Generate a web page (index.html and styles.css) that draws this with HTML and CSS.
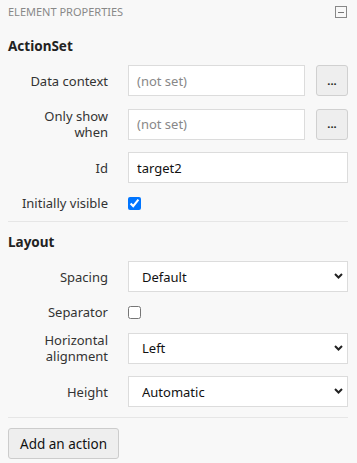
FILE: index.html
```html
<!DOCTYPE html>
<html lang="en">
<head>
    <meta charset="UTF-8">
    <meta name="viewport" content="width=device-width, initial-scale=1.0">
    <title>Element properties</title>
    <link rel="stylesheet" href="styles.css">
</head>
<body>
    <div class="panel">
        <div class="panel-header">
            <span class="panel-title">ELEMENT PROPERTIES</span>
            <span class="collapse-btn"></span>
        </div>

        <h3 class="section-title first">ActionSet</h3>
        <div class="row">
            <label class="row-label">Data context</label>
            <div class="row-control">
                <input type="text" class="text-input" placeholder="(not set)">
                <button class="dots-btn">...</button>
            </div>
        </div>
        <div class="row">
            <label class="row-label">Only show when</label>
            <div class="row-control">
                <input type="text" class="text-input" placeholder="(not set)">
                <button class="dots-btn">...</button>
            </div>
        </div>
        <div class="row">
            <label class="row-label">Id</label>
            <div class="row-control">
                <input type="text" class="text-input" value="target2">
            </div>
        </div>
        <div class="row check-row">
            <label class="row-label">Initially visible</label>
            <div class="row-control">
                <input type="checkbox" class="check" checked>
            </div>
        </div>

        <hr class="divider">

        <h3 class="section-title">Layout</h3>
        <div class="row">
            <label class="row-label">Spacing</label>
            <div class="row-control select-wrap">
                <select class="select-input">
                    <option>Default</option>
                </select>
                <svg class="chevron" width="9" height="6" viewBox="0 0 9 6"><path d="M1 1l3.5 3.5L8 1" fill="none" stroke="#222" stroke-width="2"/></svg>
            </div>
        </div>
        <div class="row check-row">
            <label class="row-label">Separator</label>
            <div class="row-control">
                <input type="checkbox" class="check">
            </div>
        </div>
        <div class="row tall-row">
            <label class="row-label">Horizontal alignment</label>
            <div class="row-control select-wrap">
                <select class="select-input">
                    <option>Left</option>
                </select>
                <svg class="chevron" width="9" height="6" viewBox="0 0 9 6"><path d="M1 1l3.5 3.5L8 1" fill="none" stroke="#222" stroke-width="2"/></svg>
            </div>
        </div>
        <div class="row">
            <label class="row-label">Height</label>
            <div class="row-control select-wrap">
                <select class="select-input">
                    <option>Automatic</option>
                </select>
                <svg class="chevron" width="9" height="6" viewBox="0 0 9 6"><path d="M1 1l3.5 3.5L8 1" fill="none" stroke="#222" stroke-width="2"/></svg>
            </div>
        </div>

        <hr class="divider">

        <button class="action-btn">Add an action</button>
    </div>
</body>
</html>
```

FILE: styles.css
```css
*{
    margin: 0;
    padding: 0;
    box-sizing: border-box;
    outline: none;
}
body {
    font-family: 'Noto Sans', 'Open Sans', sans-serif;
    font-size: 13px;
    color: #333;
    background-color: #f8f8f8;
    width: 357px;
    height: 463px;
    overflow: hidden;
}
.panel {
    padding: 4px 9px 0 8px;
}
.panel-header {
    display: flex;
    justify-content: space-between;
    align-items: center;
    height: 16px;
}
.panel-title {
    font-size: 11px;
    color: #888;
    line-height: 16px;
}
.collapse-btn {
    width: 12px;
    height: 12px;
    border: 1px solid #888;
    margin-right: 1px;
    display: flex;
    align-items: center;
    justify-content: center;
}
.collapse-btn::after {
    content: '';
    width: 6px;
    height: 1px;
    background: #777;
}
.section-title {
    font-size: 13.5px;
    font-weight: bold;
    color: #222;
    line-height: 20px;
    margin: 9px 0 9px;
}
.section-title.first {
    margin-top: 16px;
}
.row {
    display: flex;
    align-items: center;
    gap: 20px;
    margin-bottom: 12px;
}
.row-label {
    width: 100px;
    flex-shrink: 0;
    text-align: right;
    line-height: 16px;
    color: #333;
}
.tall-row {
    margin-top: 1px;
}
.row-control {
    flex: 1;
    min-width: 0;
    display: flex;
    align-items: center;
    gap: 11px;
}
.text-input {
    flex: 1;
    min-width: 0;
    width: 0;
    height: 31px;
    border: 1px solid #dcdcdc;
    background: #fff;
    padding: 0 8px;
    font-family: inherit;
    font-size: 13px;
    color: #111;
}
.text-input::placeholder {
    color: #888;
}
.dots-btn {
    width: 32px;
    height: 31px;
    flex-shrink: 0;
    border: 1px solid #d0d0d0;
    border-radius: 3px;
    background: #eee;
    font-family: inherit;
    font-size: 11px;
    font-weight: bold;
    color: #222;
    line-height: 12px;
}
.check-row .row-control {
    height: 13px;
}
.check {
    width: 13px;
    height: 13px;
    margin: 0;
}
.select-wrap {
    position: relative;
}
.select-input {
    appearance: none;
    width: 100%;
    height: 31px;
    border: 1px solid #dcdcdc;
    background: #fff;
    padding: 0 13px;
    font-family: inherit;
    font-size: 13px;
    color: #111;
}
.chevron {
    position: absolute;
    right: 5px;
    top: 12px;
}
.divider {
    border: none;
    border-top: 1px solid #e6e6e6;
    margin: -2px 0 10px;
}
.action-btn {
    height: 31px;
    padding: 0 11px;
    border: 1px solid #ccc;
    border-radius: 3px;
    background: #eee;
    font-family: inherit;
    font-size: 13.5px;
    color: #111;
}
```
